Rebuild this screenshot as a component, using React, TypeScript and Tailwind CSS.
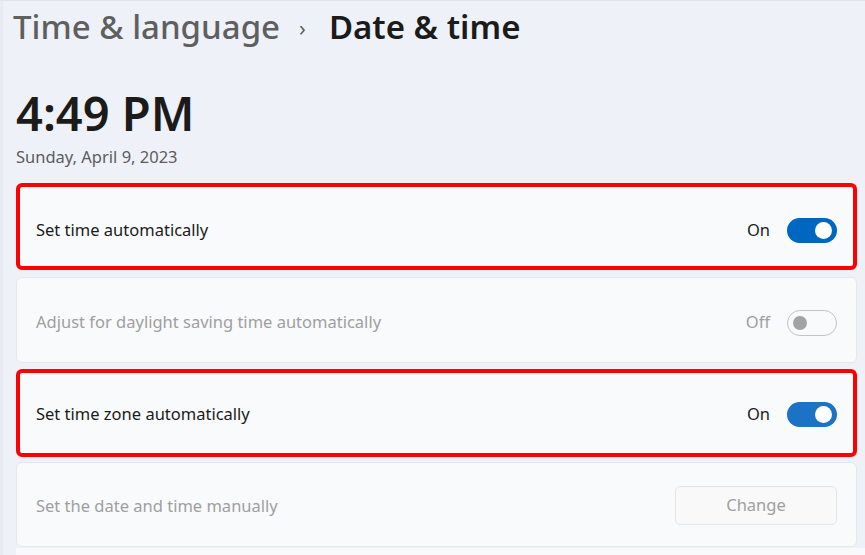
import React from 'react'

const font = { fontFamily: '"Noto Sans", "Open Sans", sans-serif' }

function Toggle({ on, disabled, hover }: { on: boolean; disabled?: boolean; hover?: boolean }) {
  if (on) {
    return (
      <div
        className={
          'w-[50px] h-[25px] rounded-full flex items-center justify-end pr-[5px] ' +
          (hover ? 'bg-[#1c73c6]' : 'bg-[#0067c0]')
        }
      >
        <div className="w-[17px] h-[17px] rounded-full bg-white" />
      </div>
    )
  }
  return (
    <div
      className={
        'w-[50px] h-[26px] rounded-full flex items-center pl-[5px] border ' +
        (disabled ? 'border-[#c4c4c4]' : 'border-[#8a8a8a]')
      }
    >
      <div className={'w-[14px] h-[14px] rounded-full ' + (disabled ? 'bg-[#a3a3a3]' : 'bg-[#5d5d5d]')} />
    </div>
  )
}

function Row({
  label,
  state,
  on,
  disabled,
  highlight,
  hover,
  className,
}: {
  label: string
  state: string
  on: boolean
  disabled?: boolean
  highlight?: boolean
  hover?: boolean
  className?: string
}) {
  const txt = 'text-[16.5px] ' + (disabled ? 'text-[#9f9f9f]' : 'text-[#1b1b1b]')
  return (
    <div
      className={
        'flex items-center justify-between rounded-[6px] shrink-0 ' +
        (highlight
          ? 'border-[4px] border-[#ff0000] bg-[#f9fafc] pl-[16px] pr-[16px] '
          : 'border border-[#e6e7ea] bg-[#f9fafc] pl-[19px] pr-[19px] ') +
        (className || '')
      }
    >
      <span className={txt}>{label}</span>
      <div className="flex items-center gap-[17px]">
        <span className={txt}>{state}</span>
        <Toggle on={on} disabled={disabled} hover={hover} />
      </div>
    </div>
  )
}

export default function App() {
  return (
    <div className="w-[865px] h-[555px] overflow-hidden flex bg-[#eef2f8] border-t border-[#e2e4e8]" style={font}>
      <div className="w-[3px] bg-[#e8ebef] shrink-0" />
      <div className="flex-1 flex flex-col pl-[13px] pr-[8px]">
        {/* breadcrumb title */}
        <div className="flex items-center h-[50px] -ml-[3px] pt-[1px] shrink-0">
          <span className="text-[33px] text-[#5f5f5f] font-medium leading-none">Time &amp; language</span>
          <span className="text-[22px] text-[#5f5f5f] ml-[19px] mr-[23px] leading-none">›</span>
          <span className="text-[33px] text-[#1b1b1b] font-semibold leading-none">Date &amp; time</span>
        </div>

        {/* clock */}
        <div className="mt-[39px] text-[47px] font-semibold text-[#1b1b1b] leading-none shrink-0">4:49 PM</div>
        <div className="mt-[12px] text-[16.5px] text-[#5c5c5c] leading-none shrink-0">Sunday, April 9, 2023</div>

        {/* settings */}
        <div className="mt-[17px] flex flex-col shrink-0">
          <Row label="Set time automatically" state="On" on highlight className="h-[87px] pt-[8px]" />
          <Row
            label="Adjust for daylight saving time automatically"
            state="Off"
            on={false}
            disabled
            className="h-[86px] mt-[7px] pt-[6px]"
          />
          <Row
            label="Set time zone automatically"
            state="On"
            on
            hover
            highlight
            className="h-[88px] mt-[6px] pt-[4px]"
          />
          <div className="mt-[5px] h-[85px] shrink-0 rounded-[6px] border border-[#e6e7ea] bg-[#f9fafc] flex items-center justify-between pl-[19px] pr-[19px] pt-[4px]">
            <span className="text-[16.5px] text-[#9f9f9f]">Set the date and time manually</span>
            <div className="w-[162px] h-[39px] -mt-[2px] rounded-[5px] border border-[#e5e5e5] bg-[#f9f9fa] flex items-center justify-center text-[16.5px] text-[#9f9f9f]">
              Change
            </div>
          </div>
        </div>
        <div className="flex-1 bg-[#f9f9fb] -mr-[8px] mt-[1px]" />
      </div>
    </div>
  )
}
